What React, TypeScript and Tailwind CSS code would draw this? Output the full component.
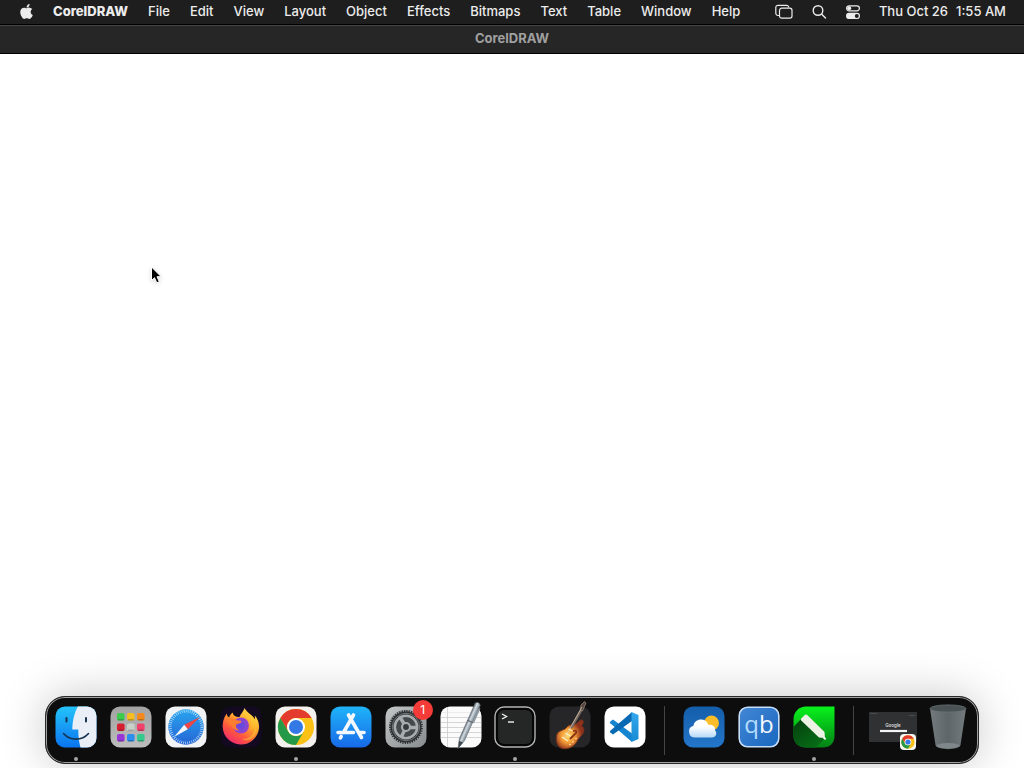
import type { ReactNode } from "react";
import { FaApple } from "react-icons/fa";

const menus = ["File", "Edit", "View", "Layout", "Object", "Effects", "Bitmaps", "Text", "Table", "Window", "Help"];

function Art({ children }: { children: ReactNode }) {
  return (
    <svg viewBox="0 0 42 42" className="block size-[42px] overflow-visible" aria-hidden="true">
      {children}
    </svg>
  );
}

function Tile({ fill }: { fill: string }) {
  return <rect x="0.5" y="0.5" width="41" height="41" rx="9.5" fill={fill} />;
}

function Finder() {
  return (
    <Art>
      <defs>
        <linearGradient id="finderBlue" x1="0" y1="0" x2="0" y2="1">
          <stop offset="0" stopColor="#25c4fb" />
          <stop offset="1" stopColor="#0a73ee" />
        </linearGradient>
        <clipPath id="finderClip"><rect x="0.5" y="0.5" width="41" height="41" rx="9.5" /></clipPath>
      </defs>
      <g clipPath="url(#finderClip)">
        <rect width="42" height="42" fill="url(#finderBlue)" />
        <path d="M23 0C19 8 17.5 15 17.3 23.5h6C23.2 30 24 36 25.6 42H42V0Z" fill="#e9eef7" />
      </g>
      <path d="M11.5 12v3.5M31 12v3.5" stroke="#17334f" strokeWidth="2" strokeLinecap="round" />
      <path d="M8.5 27.5C15 35 27 35 33.5 27.5" fill="none" stroke="#17334f" strokeWidth="1.6" strokeLinecap="round" />
    </Art>
  );
}

const padColors = ["#3ccb4b", "#f5bd20", "#f48a1d", "#d81f32", "#c9cfc9", "#f2416b", "#9837d8", "#2b8ded", "#36c98c"];

function Launchpad() {
  return (
    <Art>
      <defs>
        <linearGradient id="padGray" x1="0" y1="0" x2="0" y2="1">
          <stop offset="0" stopColor="#a2a2a2" />
          <stop offset="1" stopColor="#bcbcbc" />
        </linearGradient>
      </defs>
      <Tile fill="url(#padGray)" />
      {padColors.map((c, i) => (
        <g key={c}>
          <rect x={7 + (i % 3) * 10} y={7 + Math.floor(i / 3) * 10.5} width="7.6" height="7.6" rx="1.8" fill={c} />
          <path d={`M${8 + (i % 3) * 10} ${13.8 + Math.floor(i / 3) * 10.5}h5.6`} stroke="#00000038" strokeWidth="1.5" />
        </g>
      ))}
    </Art>
  );
}

function Safari() {
  return (
    <Art>
      <defs>
        <linearGradient id="safariBlue" x1="0" y1="0" x2="0" y2="1">
          <stop offset="0" stopColor="#2aa5ee" />
          <stop offset="1" stopColor="#2465d6" />
        </linearGradient>
      </defs>
      <Tile fill="#f2f3f5" />
      <circle cx="21" cy="21" r="17.7" fill="url(#safariBlue)" />
      <circle cx="21" cy="21" r="15.8" fill="none" stroke="#d8eefc" strokeWidth="2.6" strokeDasharray="0.65 1.4" />
      <path d="M35 11 19.200 18.800l3.600 4.400Z" fill="#ee4544" />
      <path d="M9 31 19.200 18.800l3.600 4.400Z" fill="#f3f5f8" />
    </Art>
  );
}

function Firefox() {
  return (
    <Art>
      <defs>
        <linearGradient id="foxFire" x1="0.85" y1="0" x2="0.2" y2="1">
          <stop offset="0" stopColor="#ffe94a" />
          <stop offset="0.4" stopColor="#ffa62b" />
          <stop offset="0.7" stopColor="#ff553f" />
          <stop offset="1" stopColor="#ec2377" />
        </linearGradient>
        <radialGradient id="foxGlobe">
          <stop offset="0" stopColor="#5a4be0" />
          <stop offset="1" stopColor="#9a43c9" />
        </radialGradient>
      </defs>
      <Tile fill="#130a21" />
      <path d="M24.500 2c-1 4-4 5.500-5 9-4 0-6-1-6.800-4.500C10.500 8 9.500 10 9.200 11.500 7.500 10.800 6.800 9.200 7 7.500 4 10.500 2.700 16 2.700 21A18.200 18.200 0 0 0 39 22c.3-5-1.400-9.800-4.200-12.500l.3 4C33 9 27 7 24.500 2Z" fill="url(#foxFire)" />
      <circle cx="21" cy="19.500" r="8" fill="url(#foxGlobe)" />
      <path d="M8 13.500c4-2.500 7-1 8.500.8 3 .3 4.700.2 5 1.200-.4 2-4 2.200-5.300 3 -1 2.500.2 4.400 2.800 5.500-3 1-6-1-7-4-2.500-2-4-3.500-4-6.500Z" fill="#ff7d30" />
      <path d="M25 10c5 3 8 8 6 14 3-1 4-5 3-8 3 7-1 17-12 17 12 6 18-10 12-20-3-3-7-5-9-3Z" fill="#ffc832" opacity=".5" />
    </Art>
  );
}

function ChromeDisc() {
  return (
    <>
      <circle cx="21" cy="21" r="18" fill="#fbc116" />
      <path d="M5.400 12A18 18 0 0 1 36.600 12H21a9 9 0 0 0-7.800 13.500Z" fill="#e33b2e" />
      <path d="M5.400 12 13.200 25.500A9 9 0 0 0 28.800 25.500L21 39A18 18 0 0 1 5.400 12Z" fill="#249a49" />
      <circle cx="21" cy="21" r="9" fill="#fff" />
      <circle cx="21" cy="21" r="7" fill="#3478e5" />
    </>
  );
}

function Chrome() {
  return (
    <Art>
      <Tile fill="#f3f1ed" />
      <ChromeDisc />
    </Art>
  );
}

function AppStore() {
  return (
    <Art>
      <defs>
        <linearGradient id="storeBlue" x1="0" y1="0" x2="0" y2="1">
          <stop offset="0" stopColor="#1fb4f9" />
          <stop offset="1" stopColor="#1769e8" />
        </linearGradient>
      </defs>
      <Tile fill="url(#storeBlue)" />
      <g fill="none" stroke="#f4f9ff" strokeWidth="3.600" strokeLinecap="round">
        <path d="M23.500 9 13.500 26.500M18.500 9 31.500 31.500M8 26.500h15.500M29 26.500h5M11.200 30.500l-.8 1.400" />
      </g>
    </Art>
  );
}

function Settings() {
  return (
    <Art>
      <defs>
        <linearGradient id="settingsGray" x1="0" y1="0" x2="1" y2="1">
          <stop offset="0" stopColor="#c4c8c8" />
          <stop offset="1" stopColor="#868b8d" />
        </linearGradient>
      </defs>
      <Tile fill="url(#settingsGray)" />
      <circle cx="21" cy="21" r="17" fill="#2d3133" />
      <circle cx="21" cy="21" r="16.400" fill="none" stroke="#a0a4a5" strokeWidth="1.800" strokeDasharray="1.100 1.350" />
      <circle cx="21" cy="21" r="13.700" fill="none" stroke="#717779" strokeWidth="1" />
      <circle cx="21" cy="21" r="11.200" fill="#444a4c" stroke="#a8adae" strokeWidth="2.600" />
      <path d="M24.500 21.500H32M19 17.500l-4.500-7M19.500 24.500l-3.500 7" stroke="#a8adae" strokeWidth="3.400" />
      <circle cx="21" cy="21" r="4" fill="#373b3d" stroke="#a8adae" strokeWidth="2.200" />
    </Art>
  );
}

function TextEdit() {
  return (
    <Art>
      <defs>
        <linearGradient id="penMetal" x1="0" y1="0" x2="1" y2="0">
          <stop offset="0" stopColor="#626c74" />
          <stop offset="0.4" stopColor="#d4dce2" />
          <stop offset="1" stopColor="#75828c" />
        </linearGradient>
      </defs>
      <Tile fill="#fbfbfb" />
      <path d="M1 11.500h40M1 16.500h40M1 21.500h40M1 26.500h40M1 31.500h40M7.500 1v40" stroke="#c4c4c4" strokeWidth=".7" />
      <path d="M1 6.500h40" stroke="#ddd" strokeWidth=".5" />
      <g transform="rotate(24 28 20)">
        <path d="M25.200-4q2.800-3 5.600 0v39L28 44.500 25.200 35Z" fill="url(#penMetal)" stroke="#67717a" strokeWidth=".5" />
        <path d="M25.800 37h4.400L28 44.500Z" fill="#41484d" />
        <path d="M31.600-1v16" stroke="#89939b" strokeWidth="1.300" />
        <path d="M25.200 15h5.600" stroke="#555e65" />
      </g>
    </Art>
  );
}

function Terminal() {
  return (
    <Art>
      <rect x="1" y="1" width="40" height="40" rx="9" fill="#050505" stroke="#b4b4b4" strokeWidth="1.400" />
      <rect x="4" y="4" width="34" height="34" rx="6" fill="#252626" />
      <path d="m8 8 4.500 2.500L8 13" fill="none" stroke="#f1f1f1" strokeWidth="1.400" />
      <path d="M14 16h6" stroke="#f1f1f1" strokeWidth="1.400" />
    </Art>
  );
}

function GarageBand() {
  return (
    <Art>
      <defs>
        <radialGradient id="guitarWood" cx=".42" cy=".55">
          <stop offset="0" stopColor="#ffdc70" />
          <stop offset=".5" stopColor="#f39a35" />
          <stop offset="1" stopColor="#8f321c" />
        </radialGradient>
      </defs>
      <Tile fill="#262628" />
      <path d="M8 28C6.500 32 7 41 13 42.500c6 1.500 13-2 15.500-8 1.500-3.500 5.500-5 6.300-9 .6-3.500-.8-5-2.500-5.500 2-2 3-5 1-6-3-1-4 4-8.300 4.500-3 .3-6 .5-7.500 3C16 24.500 9.500 24 8 28Z" fill="url(#guitarWood)" stroke="#6d311c" strokeWidth=".8" />
      <path d="M22 22 32.500 3.500" stroke="#77675d" strokeWidth="2.600" />
      <path d="m31.500 4 .5-5 3.500-3.500 1.500 1.500-3.500 8Z" fill="#57483f" stroke="#9b8d82" strokeWidth=".7" />
      <path d="M15 33 33 1" stroke="#d6cdbd" strokeWidth=".7" />
      <path d="M24 25c3-1 4 0 3 2l-6 6" fill="none" stroke="#863319" strokeWidth="1.800" />
      <path d="m13 31 6 4M16.500 27l5 3M19.500 23l4 2" stroke="#fff0bd" strokeWidth="1.300" />
      <g fill="#fff1bd"><circle cx="24" cy="36" r=".8" /><circle cx="21" cy="38.500" r=".8" /><circle cx="27" cy="32.500" r=".8" /></g>
    </Art>
  );
}

function Code() {
  return (
    <Art>
      <defs>
        <linearGradient id="codeSlab" x1="0" y1="0" x2="0" y2="1">
          <stop offset="0" stopColor="#35a7ed" />
          <stop offset="1" stopColor="#168bd3" />
        </linearGradient>
      </defs>
      <Tile fill="#fff" />
      <path d="M9 13.500 28 27.500V36L6.300 17.200q-.8-.8 0-1.600Z" fill="#1685d0" />
      <path d="M28 6v9L9 28.500l-2.700-2.100q-.8-.8 0-1.600Z" fill="#0a69b3" />
      <path d="m27.500 6 7 3v24l-7 3Z" fill="url(#codeSlab)" />
    </Art>
  );
}

function Weather() {
  return (
    <Art>
      <defs>
        <linearGradient id="skyBlue" x1="0" y1="0" x2="0" y2="1">
          <stop offset="0" stopColor="#145eaa" />
          <stop offset="1" stopColor="#2476ca" />
        </linearGradient>
        <linearGradient id="cloudWhite" x1="0" y1="0" x2="0" y2="1">
          <stop offset=".4" stopColor="#fff" />
          <stop offset="1" stopColor="#b6d9f8" />
        </linearGradient>
      </defs>
      <Tile fill="url(#skyBlue)" />
      <circle cx="28.500" cy="17" r="7.500" fill="#fbbd29" />
      <path d="M12 31.500a6 6 0 0 1-1.500-11.800c1-7.500 12.500-8.500 15-.8 4.500-.5 7 2 6.500 5.300 2.800 3 .8 7.300-3 7.300Z" fill="url(#cloudWhite)" />
    </Art>
  );
}

function QBittorrent() {
  return (
    <Art>
      <defs>
        <linearGradient id="qbBlue" x1="0" y1="0" x2="1" y2="1">
          <stop offset="0" stopColor="#4487d4" />
          <stop offset="1" stopColor="#1767c0" />
        </linearGradient>
      </defs>
      <rect x="1.200" y="1.200" width="39.600" height="39.600" rx="8.500" fill="url(#qbBlue)" stroke="#c7defb" strokeWidth="1.600" />
      <text x="21" y="27" textAnchor="middle" fontFamily="Open Sans, sans-serif" fontSize="24">
        <tspan fill="#b5ddff">q</tspan>
        <tspan fill="#f5f9ff">b</tspan>
      </text>
    </Art>
  );
}

function Corel() {
  return (
    <Art>
      <defs>
        <linearGradient id="corelGreen" x1="0" y1="0" x2="0" y2="1">
          <stop offset="0" stopColor="#08f31c" />
          <stop offset="1" stopColor="#038016" />
        </linearGradient>
        <linearGradient id="corelShade" x1="0" y1="0" x2=".8" y2="1">
          <stop offset="0" stopColor="#063d0d" />
          <stop offset="1" stopColor="#067018" />
        </linearGradient>
      </defs>
      <path d="M13 .5h28.500V30c0 7-4.500 11.500-11.500 11.500H13C6 41.500.5 37 .5 30V13C.5 6 6 .5 13 .5Z" fill="url(#corelGreen)" />
      <path d="M9 12 .5 21v9c0 7 5.500 11.500 12.500 11.500h10l8.500-8.500Z" fill="url(#corelShade)" />
      <path d="M8.200 12.500 12 8.800q1-.8 2 0L31.500 26l.5 6-6-.5L8.200 14.500q-1-1 0-2Z" fill="#edf1e6" />
      <path d="m30.500 31.500 2.200 1.800" stroke="#fff" strokeWidth="1.800" />
    </Art>
  );
}

function MinimizedWindow() {
  return (
    <svg viewBox="0 0 50 42" className="block h-[42px] w-[50px] overflow-visible" aria-hidden="true">
      <rect x="1" y="6" width="48" height="30" fill="#303133" />
      <path d="M2 7.500h7M41 9.500h6" stroke="#55575a" strokeWidth=".7" />
      <text x="25" y="21" textAnchor="middle" fill="#ddd" fontSize="4.500" fontWeight="600" fontFamily="Inter, sans-serif">Google</text>
      <path d="M12 25h27" stroke="#f5f5f5" strokeWidth="2.200" />
      <rect x="32" y="28" width="16" height="16" rx="4" fill="#f7f7f2" />
      <g transform="translate(32.200 28.200) scale(.37)"><ChromeDisc /></g>
    </svg>
  );
}

function Trash() {
  return (
    <Art>
      <defs>
        <linearGradient id="binGlass" x1="0" y1="0" x2="1" y2="0">
          <stop offset="0" stopColor="#737b7e" />
          <stop offset=".5" stopColor="#5d6669" />
          <stop offset="1" stopColor="#737b7e" />
        </linearGradient>
      </defs>
      <path d="M3 2.500 8.500 39c.5 5.500 24.500 5.500 25 0L39 2.500Z" fill="url(#binGlass)" />
      <path d="M9 39.500c3 4 21 4 24 0-4-3.500-20-3.500-24 0Z" fill="#7f878a" />
      <ellipse cx="21" cy="2.500" rx="18" ry="3.600" fill="#4a5255" stroke="#697275" strokeWidth=".8" />
    </Art>
  );
}

type DockItem = { name: string; art: ReactNode; running?: boolean; badge?: string };

const groups: DockItem[][] = [
  [
    { name: "Finder", art: <Finder />, running: true },
    { name: "Launchpad", art: <Launchpad /> },
    { name: "Safari", art: <Safari /> },
    { name: "Firefox", art: <Firefox /> },
    { name: "Chrome", art: <Chrome />, running: true },
    { name: "App Store", art: <AppStore /> },
    { name: "System Settings", art: <Settings />, badge: "1" },
    { name: "TextEdit", art: <TextEdit /> },
    { name: "Terminal", art: <Terminal />, running: true },
    { name: "GarageBand", art: <GarageBand /> },
    { name: "Visual Studio Code", art: <Code /> },
  ],
  [
    { name: "Weather", art: <Weather /> },
    { name: "qBittorrent", art: <QBittorrent /> },
    { name: "CorelDRAW", art: <Corel />, running: true },
  ],
  [
    { name: "Minimized window", art: <MinimizedWindow /> },
    { name: "Trash", art: <Trash /> },
  ],
];

function DockButton({ item }: { item: DockItem }) {
  return (
    <button type="button" aria-label={item.name} className="flex min-w-0 flex-1 flex-col items-center gap-[9px]">
      <span className="relative">
        {item.art}
        {item.badge && (
          <span className="absolute -top-1.5 -right-1.5 flex size-5 items-center justify-center rounded-full bg-[#f43b38] text-xs text-white">
            {item.badge}
          </span>
        )}
      </span>
      {item.running && <span className="size-1 rounded-full bg-[#a5a5a5]" />}
    </button>
  );
}

function MenuBar() {
  return (
    <header className="flex h-6 items-center justify-between bg-[#1e1e1e] px-[18px] text-[13px] leading-5 font-medium text-[#ececec]">
      <nav className="flex items-center gap-5 pb-0.5">
        <button type="button" aria-label="Apple menu" className="-mr-0.5 flex">
          <FaApple className="size-[17px]" />
        </button>
        <button type="button" className="font-extrabold">CorelDRAW</button>
        {menus.map((m) => (
          <button type="button" key={m}>{m}</button>
        ))}
      </nav>
      <div className="flex items-center gap-[18px]">
        <button type="button" aria-label="Screen mirroring">
          <svg viewBox="0 0 18 16" className="h-4 w-[18px]" fill="none" stroke="currentColor" strokeWidth="1.200">
            <path d="M4.500 11.500H3A2.200 2.200 0 0 1 .8 9.300V3.500A2.200 2.200 0 0 1 3 1.300h8.500a2.200 2.200 0 0 1 2.200 2.200" />
            <rect x="4.500" y="4.200" width="12.500" height="10" rx="2.200" />
          </svg>
        </button>
        <button type="button" aria-label="Search">
          <svg viewBox="0 0 16 16" className="size-4" fill="none" stroke="currentColor" strokeWidth="1.400" strokeLinecap="round">
            <circle cx="7" cy="6.500" r="4.800" />
            <path d="m10.700 10.200 3.800 3.800" />
          </svg>
        </button>
        <button type="button" aria-label="Control Center">
          <svg viewBox="0 0 16 16" className="size-4">
            <rect x="1.600" y="1.800" width="12.800" height="5" rx="2.500" fill="none" stroke="currentColor" strokeWidth="1.200" />
            <circle cx="4.200" cy="4.300" r="2" fill="currentColor" />
            <rect x="1" y="8.800" width="14" height="6.200" rx="3.100" fill="currentColor" />
            <circle cx="11.800" cy="11.900" r="2" fill="#1e1e1e" />
          </svg>
        </button>
        <time className="flex gap-2 pb-0.5">
          <span>Thu Oct 26</span>
          <span>1:55 AM</span>
        </time>
      </div>
    </header>
  );
}

export default function App() {
  return (
    <div className="relative flex min-h-screen flex-col overflow-hidden bg-white font-['Inter',sans-serif]">
      <MenuBar />
      <div className="flex h-[30px] items-center justify-center border-y border-black bg-[#262626] pb-0.5 text-[13px] leading-5 font-bold text-[#a0a0a0] shadow-[inset_0_1px_0_#454545]">
        <h1>CorelDRAW</h1>
      </div>
      <main className="flex-1" />
      <svg viewBox="0 0 14 20" className="absolute top-[265px] left-[150px] h-5 w-3.5 drop-shadow-sm" aria-hidden="true">
        <path d="M1.500 2v13.500l3-2.800 2.300 5.100 2.500-1.100-2.300-5h4.200Z" fill="#000" stroke="#fff" strokeWidth="1" />
      </svg>
      <footer className="mx-[45px] mb-1 flex h-[68px] rounded-[20px] border border-[#292929] bg-[#0d0d0d] px-[3px] pt-[9px] shadow-[inset_0_0_0_1px_#a0a0a0,0_0_45px_#00000038]">
        {groups.map((group, i) => (
          <div key={group[0].name} className="contents">
            {i > 0 && (
              <div className="flex w-6 justify-center pb-2">
                <span className="w-px bg-[#444]" />
              </div>
            )}
            {group.map((item) => (
              <DockButton key={item.name} item={item} />
            ))}
          </div>
        ))}
      </footer>
    </div>
  );
}
